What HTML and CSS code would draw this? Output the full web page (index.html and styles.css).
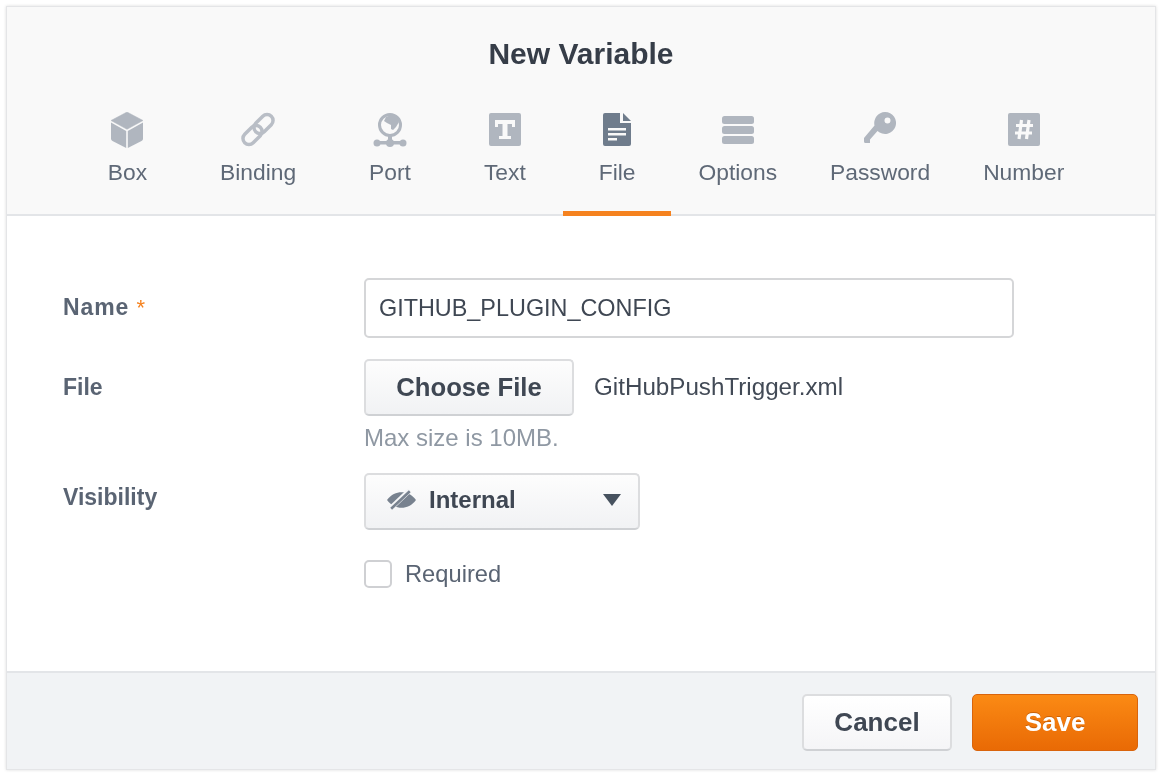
FILE: index.html
```html
<!DOCTYPE html>
<html lang="en">
<head>
	<meta charset="UTF-8">
	<title>New Variable</title>
	<link rel="stylesheet" href="styles.css">
</head>
<body>
	<div class="modal">
		<div class="modal-head">
			<h1 class="title">New Variable</h1>
			<div class="tabs">
				<div class="tab">
					<svg class="tab-icon" viewBox="0 0 34 36"><path d="M17 0l16 8.500-16 8.800-16-8.800z" stroke="#b0b6bf" stroke-width="0.500"/><path d="M1 10.500l15.200 8.400V36L2.500 29C1.500 28.400 1 27.600 1 26.500z"/><path d="M33 10.500l-15.200 8.400V36l13.700-7c1-.6 1.500-1.400 1.500-2.500z"/></svg>
					<span>Box</span>
				</div>
				<div class="tab">
					<svg class="tab-icon" viewBox="0 0 34 36"><g fill="none" stroke="#b9bec6" stroke-width="3.500"><rect x="-6" y="-11" width="12" height="22" rx="6" transform="translate(22.500 12) rotate(45)"/><rect x="-6" y="-11" width="12" height="22" rx="6" transform="translate(11.500 23) rotate(45)"/></g></svg>
					<span>Binding</span>
				</div>
				<div class="tab">
					<svg class="tab-icon" viewBox="0 0 34 36"><circle cx="17" cy="13" r="10.500" fill="none" stroke="#b0b6bf" stroke-width="3"/><path d="M13 5l5-2 6 2 2 5-3 5-3 3-2-1 0-4-4-2-3-2z"/><rect x="15" y="23" width="4" height="8"/><rect x="3" y="29" width="28" height="3.500"/><circle cx="4" cy="31" r="3.500"/><circle cx="17" cy="31" r="4"/><circle cx="30" cy="31" r="3.500"/></svg>
					<span>Port</span>
				</div>
				<div class="tab">
					<svg class="tab-icon" viewBox="0 0 34 36"><path fill-rule="evenodd" d="M3 1h28a2 2 0 0 1 2 2v29a2 2 0 0 1-2 2H3a2 2 0 0 1-2-2V3a2 2 0 0 1 2-2zm4 7v7h3v-3h4.500v12H11v3h12v-3h-3.500V12H24v3h3V8z"/></svg>
					<span>Text</span>
				</div>
				<div class="tab active">
					<svg class="tab-icon" viewBox="0 0 34 36"><path fill-rule="evenodd" d="M5 1h15v10h11v21a2 2 0 0 1-2 2H5a2 2 0 0 1-2-2V3a2 2 0 0 1 2-2zm3 15v2.500h18V16zm0 5v2.500h18V21zm0 5v2.500h9V26z"/><path d="M23 1l8 8h-8z"/></svg>
					<span>File</span>
				</div>
				<div class="tab tab-narrow">
					<svg class="tab-icon" viewBox="0 0 34 36"><rect x="1" y="4" width="32" height="8" rx="2.500"/><rect x="1" y="14" width="32" height="8" rx="2.500"/><rect x="1" y="24" width="32" height="8" rx="2.500"/></svg>
					<span>Options</span>
				</div>
				<div class="tab tab-narrow">
					<svg class="tab-icon" viewBox="0 0 34 36"><path fill-rule="evenodd" d="M22 0a11 11 0 1 1-7.500 19L7 27.500V31H2.500a1.500 1.500 0 0 1-1.500-1.500V26L11.500 13.500A11 11 0 0 1 22 0zm2.500 5.500a3 3 0 1 0 0 6 3 3 0 0 0 0-6z"/></svg>
					<span>Password</span>
				</div>
				<div class="tab tab-narrow">
					<svg class="tab-icon" viewBox="0 0 34 36"><rect x="1" y="1" width="32" height="33" rx="2"/><path d="M14.500 8l-2.500 19M22 8l-2.500 19M9 13.500h17M8 21h17" fill="none" stroke="#f9f9f9" stroke-width="3.200"/></svg>
					<span>Number</span>
				</div>
			</div>
		</div>

		<div class="modal-body">
			<div class="row row-name">
				<label class="row-label">Name <span class="req">*</span></label>
				<input class="text-input" type="text" value="GITHUB_PLUGIN_CONFIG">
			</div>
			<div class="row row-file">
				<label class="row-label">File</label>
				<div>
					<div class="file-line">
						<button class="btn btn-choose">Choose File</button>
						<span class="file-name">GitHubPushTrigger.xml</span>
					</div>
					<div class="hint">Max size is 10MB.</div>
				</div>
			</div>
			<div class="row row-vis">
				<label class="row-label">Visibility</label>
				<div class="select">
					<svg class="eye" viewBox="0 0 30 20"><path d="M1 10.500C5 5 10 3 15 3c5 0 10 2 14 7.500C25 16 20 18 15 18c-5 0-10-2-14-7.500z"/><path d="M4 19L23 1" fill="none" stroke="#f5f6f7" stroke-width="5"/><path d="M5 19L23 2" fill="none" stroke="#78828f" stroke-width="2.500"/></svg>
					<span class="select-text">Internal</span>
					<span class="caret"></span>
				</div>
			</div>
			<div class="row row-check">
				<span></span>
				<label class="check-line"><span class="checkbox"></span>Required</label>
			</div>
		</div>

		<div class="modal-foot">
			<button class="btn btn-cancel">Cancel</button>
			<button class="btn btn-save">Save</button>
		</div>
	</div>
</body>
</html>
```

FILE: styles.css
```css
* {
	margin: 0;
	padding: 0;
	box-sizing: border-box;
}
body {
	background-color: #fff;
	font-family: "Liberation Sans", Arial, sans-serif;
	color: #4a5361;
	padding: 6px 4px 4px 6px;
	height: 774px;
	overflow: hidden;
}
.modal {
	height: 764px;
	border: 1px solid #e4e5e7;
	box-shadow: 0 0 3px #ddd;
	display: flex;
	flex-direction: column;
	filter: blur(0.6px);
}
.modal-head {
	height: 209px;
	background-color: #f9f9f9;
	border-bottom: 2px solid #e3e5e8;
}
.title {
	font-size: 30px;
	font-weight: bold;
	color: #363d48;
	text-align: center;
	padding-top: 31px;
	line-height: 32px;
}
.tabs {
	display: flex;
	justify-content: center;
	margin-top: 28px;
}
.tab {
	display: flex;
	flex-direction: column;
	align-items: center;
	padding: 0 36.500px;
	height: 118px;
	font-size: 22.800px;
	color: #5f6977;
	border-bottom: 5px solid transparent;
}
.tab-narrow {
	padding: 0 26.500px;
}
.tab.active {
	padding: 0 35.500px;
	margin: 0 1px;
	border-bottom-color: #f5821f;
}
.tab-icon {
	width: 34px;
	height: 36px;
	margin-top: 14px;
	margin-bottom: 11px;
	fill: #b0b6bf;
}
.tab.active .tab-icon {
	fill: #6f7c8c;
}
.modal-body {
	flex: 1;
	background-color: #fff;
	padding: 62px 0 0 56px;
}
.row {
	display: grid;
	grid-template-columns: 301px 1fr;
}
.row-label {
	font-size: 23px;
	font-weight: bold;
	color: #5a6473;
}
.req {
	color: #f5821f;
	font-weight: normal;
	font-size: 22px;
}
.row-name {
	height: 81px;
}
.row-name .row-label {
	padding-top: 16px;
	letter-spacing: 0.9px;
}
.text-input {
	width: 650px;
	height: 60px;
	border: 2px solid #d5d6d8;
	border-radius: 5px;
	padding: 0 13px;
	font: 23.400px "Liberation Sans", Arial, sans-serif;
	color: #3f4753;
	background-color: #fff;
}
.row-file {
	height: 114px;
}
.row-file .row-label {
	padding-top: 15px;
}
.file-line {
	display: flex;
	align-items: center;
	gap: 20px;
}
.btn {
	font-family: "Liberation Sans", Arial, sans-serif;
	font-weight: bold;
	border-radius: 5px;
	cursor: pointer;
}
.btn-choose {
	width: 210px;
	height: 57px;
	font-size: 25.700px;
	color: #3f4753;
	border: 2px solid #dcdddf;
	border-bottom-color: #cfd1d4;
	background: linear-gradient(#fdfdfd, #f1f2f4);
}
.file-name {
	font-size: 24.200px;
	color: #424a56;
	margin-bottom: 2px;
}
.hint {
	font-size: 24px;
	color: #8f98a3;
	margin-top: 9px;
	line-height: 26px;
}
.row-vis {
	height: 87px;
}
.row-vis .row-label {
	padding-top: 11px;
}
.select {
	width: 276px;
	height: 57px;
	border: 2px solid #dcdddf;
	border-bottom-color: #cfd1d4;
	border-radius: 5px;
	background: linear-gradient(#fdfdfd, #f1f2f4);
	display: flex;
	align-items: center;
	padding: 0 17px 4px 20px;
}
.eye {
	width: 31px;
	height: 21px;
	fill: #78828f;
	margin-right: 12px;
}
.select-text {
	flex: 1;
	font-size: 24px;
	font-weight: bold;
	color: #3f4753;
}
.caret {
	width: 0;
	height: 0;
	border-left: 9px solid transparent;
	border-right: 9px solid transparent;
	border-top: 12px solid #47525f;
}
.check-line {
	display: flex;
	align-items: center;
	gap: 13px;
	font-size: 23.700px;
	color: #5a6473;
}
.checkbox {
	width: 28px;
	height: 28px;
	border: 2px solid #cfd0d3;
	border-radius: 5px;
	background-color: #fff;
}
.modal-foot {
	height: 98px;
	background-color: #f1f3f5;
	border-top: 2px solid #e3e5e8;
	display: flex;
	justify-content: flex-end;
	align-items: flex-start;
	gap: 20px;
	padding: 21px 17px 0 0;
}
.btn-cancel {
	width: 150px;
	height: 57px;
	font-size: 26px;
	color: #3f4753;
	border: 2px solid #dcdddf;
	border-bottom-color: #cfd1d4;
	background: linear-gradient(#fff, #f5f5f7);
}
.btn-save {
	width: 166px;
	height: 57px;
	font-size: 26px;
	color: #fff;
	border: 1px solid #d9640c;
	background: linear-gradient(#fb8a14, #e96a05);
	text-shadow: 0 -1px 0 rgba(160, 70, 0, 0.5);
}
```
